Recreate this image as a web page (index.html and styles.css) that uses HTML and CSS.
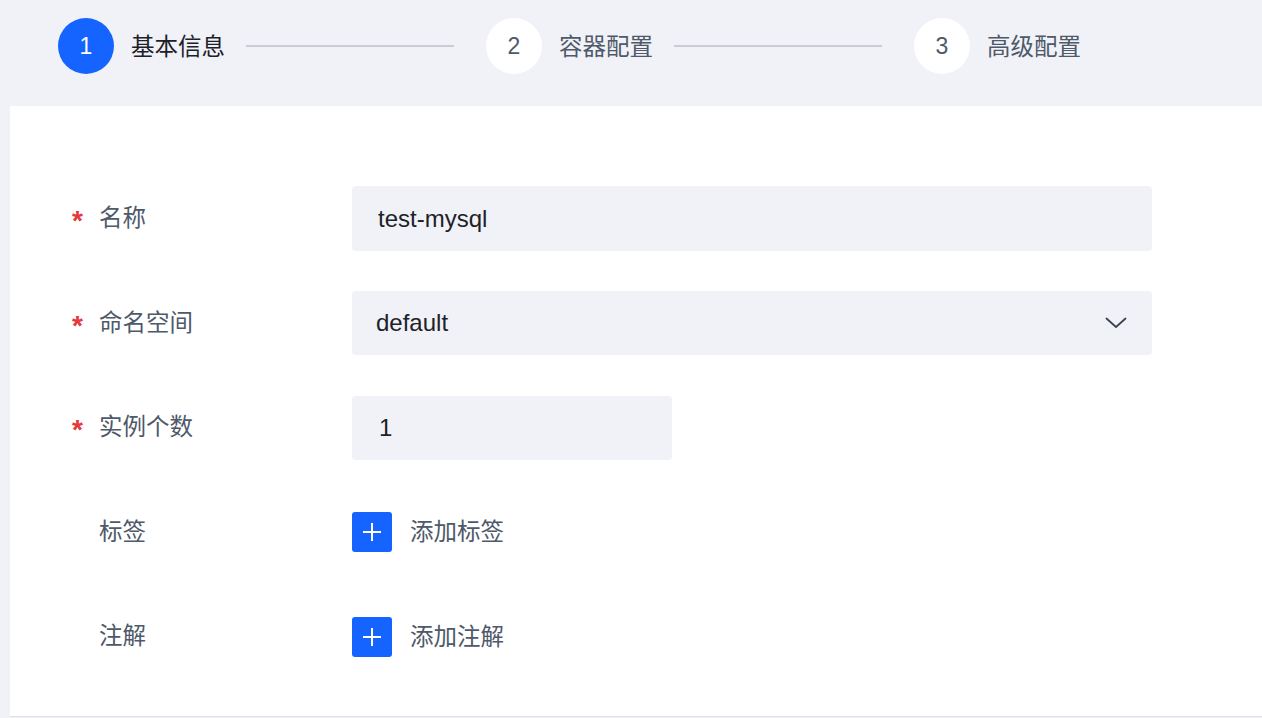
FILE: index.html
```html
<!DOCTYPE html>
<html lang="zh">
<head>
<meta charset="utf-8">
<title>创建</title>
<link rel="stylesheet" href="styles.css">
</head>
<body>
<div class="steps">
  <div class="step active">
    <div class="circle">1</div>
    <div class="step-title">基本信息</div>
    <div class="line"></div>
  </div>
  <div class="step">
    <div class="circle">2</div>
    <div class="step-title">容器配置</div>
    <div class="line"></div>
  </div>
  <div class="step last">
    <div class="circle">3</div>
    <div class="step-title">高级配置</div>
  </div>
</div>
<div class="card">
  <div class="form">
    <div class="row">
      <div class="label"><span class="req">*</span>名称</div>
      <div class="control"><div class="input wide">test-mysql</div></div>
    </div>
    <div class="row">
      <div class="label"><span class="req">*</span>命名空间</div>
      <div class="control">
        <div class="input wide select">default
          <svg class="chev" width="22" height="12" viewBox="0 0 22 12"><path d="M1.5 1.5 L11 10 L20.5 1.5" fill="none" stroke="#3c4350" stroke-width="1.8" stroke-linecap="round" stroke-linejoin="round"/></svg>
        </div>
      </div>
    </div>
    <div class="row">
      <div class="label"><span class="req">*</span>实例个数</div>
      <div class="control"><div class="input narrow num">1</div></div>
    </div>
    <div class="row">
      <div class="label plain">标签</div>
      <div class="control add">
        <span class="plus"><svg width="20" height="20" viewBox="0 0 20 20"><path d="M10 1 V19 M1 10 H19" stroke="#fff" stroke-width="2"/></svg></span>
        <span class="add-text">添加标签</span>
      </div>
    </div>
    <div class="row">
      <div class="label plain">注解</div>
      <div class="control add">
        <span class="plus"><svg width="20" height="20" viewBox="0 0 20 20"><path d="M10 1 V19 M1 10 H19" stroke="#fff" stroke-width="2"/></svg></span>
        <span class="add-text">添加注解</span>
      </div>
    </div>
  </div>
</div>
</body>
</html>
```

FILE: styles.css
```css
html, body {
  margin: 0;
  padding: 0;
  background: #f1f2f7;
  font-family: "Liberation Sans", "Noto Sans CJK SC", sans-serif;
  height: 718px;
  overflow: hidden;
}

.steps {
  display: flex;
  align-items: center;
  height: 106px;
  box-sizing: border-box;
  padding: 0 0 14px 58px;
}

.step {
  display: flex;
  align-items: center;
  width: 428px;
  flex: none;
}

.step.last {
  width: auto;
}

.circle {
  width: 56px;
  height: 56px;
  border-radius: 50%;
  background: #fff;
  color: #4e5969;
  font-size: 23px;
  display: flex;
  align-items: center;
  justify-content: center;
  flex: none;
}

.step.active .circle {
  background: #1664ff;
  color: #fff;
}

.step-title {
  margin-left: 17px;
  font-size: 23.5px;
  color: #4e5969;
  font-family: "Noto Sans CJK SC", sans-serif;
  line-height: 30px;
  padding-bottom: 2px;
  width: 115px;
  flex: none;
}

.step.active .step-title {
  color: #1d2129;
}

.line {
  width: 208px;
  height: 2px;
  background: #c9cdd4;
  flex: none;
}

.card {
  margin-left: 10px;
  background: #fff;
  height: 611px;
  border-bottom: 1px solid #dfe1e5;
  box-sizing: border-box;
  padding: 80px 0 0 62px;
}

.form {
  display: flex;
  flex-direction: column;
  gap: 39.5px;
}

.row {
  display: flex;
  align-items: center;
  height: 65px;
}

.label {
  width: 280px;
  box-sizing: border-box;
  flex: none;
  font-size: 23.5px;
  color: #4e5969;
  font-family: "Noto Sans CJK SC", sans-serif;
  display: flex;
  align-items: center;
  padding-bottom: 5px;
}

.label.plain {
  padding-left: 27px;
}

.req {
  color: #e5383b;
  font-family: "Liberation Sans", sans-serif;
  font-size: 28px;
  font-weight: bold;
  width: 27px;
  position: relative;
  top: 5px;
}

.input {
  background: #f1f2f7;
  border-radius: 4px;
  height: 65px;
  box-sizing: border-box;
  display: flex;
  align-items: center;
  padding-left: 26px;
  font-size: 24px;
  color: #1d2129;
}

.input.wide { width: 800px; }
.input.narrow { width: 320px; }
.input.select {
  height: 64px;
  padding-left: 24px;
  justify-content: space-between;
  padding-right: 25px;
}
.input.num { height: 64px; padding-left: 27px; }

.chev { display: block; }

.add {
  display: flex;
  align-items: center;
}

.plus {
  width: 40px;
  height: 40px;
  border-radius: 3px;
  background: #1664ff;
  display: flex;
  align-items: center;
  justify-content: center;
}

.plus svg { display: block; }

.add-text {
  margin-left: 18px;
  font-size: 23.5px;
  color: #4e5969;
  font-family: "Noto Sans CJK SC", sans-serif;
  padding-bottom: 4px;
}
```
